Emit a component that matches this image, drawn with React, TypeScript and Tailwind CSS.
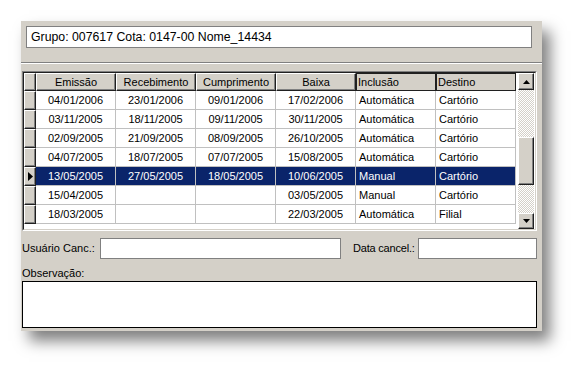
import React from "react";

type Row = { e: string; r: string; c: string; b: string; i: string; d: string; sel?: boolean };

const rows: Row[] = [
  { e: "04/01/2006", r: "23/01/2006", c: "09/01/2006", b: "17/02/2006", i: "Automática", d: "Cartório" },
  { e: "03/11/2005", r: "18/11/2005", c: "09/11/2005", b: "30/11/2005", i: "Automática", d: "Cartório" },
  { e: "02/09/2005", r: "21/09/2005", c: "08/09/2005", b: "26/10/2005", i: "Automática", d: "Cartório" },
  { e: "04/07/2005", r: "18/07/2005", c: "07/07/2005", b: "15/08/2005", i: "Automática", d: "Cartório" },
  { e: "13/05/2005", r: "27/05/2005", c: "18/05/2005", b: "10/06/2005", i: "Manual", d: "Cartório", sel: true },
  { e: "15/04/2005", r: "", c: "", b: "03/05/2005", i: "Manual", d: "Cartório" },
  { e: "18/03/2005", r: "", c: "", b: "22/03/2005", i: "Automática", d: "Filial" },
];

function HeadCell({ label, left }: { label: string; left?: boolean }) {
  if (left) {
    return (
      <div className="w-[80px] h-[18px] box-border border border-[#202020] bg-[#d4d0c8] flex items-center pl-[1px] leading-none">
        {label}
      </div>
    );
  }
  return (
    <div className="w-[80px] h-[18px] box-border border-t border-l border-t-white border-l-white border-r border-b border-r-[#202020] border-b-[#202020] shadow-[inset_-1px_-1px_0_#808080] bg-[#d4d0c8] flex items-center justify-center leading-none">
      {label}
    </div>
  );
}

function Cell({ text, left, sel }: { text: string; left?: boolean; sel?: boolean }) {
  return (
    <div
      className={`w-[80px] h-[19px] box-border border-r border-b border-[#c0c0c0] flex items-center leading-none ${
        left ? "pl-[3px]" : "justify-center"
      } ${sel ? "bg-[#0a246a] text-white" : "bg-white"}`}
    >
      {text}
    </div>
  );
}

function Indicator({ sel }: { sel?: boolean }) {
  return (
    <div className="w-[12px] h-[19px] box-border border-t border-l border-t-white border-l-white border-r border-b border-r-[#202020] border-b-[#202020] shadow-[inset_-1px_-1px_0_#808080] bg-[#d4d0c8] flex items-center pl-[3px]">
      {sel ? (
        <svg width="5" height="9" viewBox="0 0 5 9">
          <polygon points="0,0 5,4.5 0,9" fill="#000" />
        </svg>
      ) : null}
    </div>
  );
}

function ScrollBtn({ up, h }: { up?: boolean; h: string }) {
  return (
    <div
      className={`w-[16px] ${h} box-border border-t border-l border-t-white border-l-white border-r border-b border-r-[#202020] border-b-[#202020] shadow-[inset_-1px_-1px_0_#808080] bg-[#d4d0c8] flex items-center justify-center`}
    >
      <svg width="7" height="4" viewBox="0 0 7 4">
        {up ? <polygon points="3.5,0 7,4 0,4" fill="#000" /> : <polygon points="0,0 7,0 3.5,4" fill="#000" />}
      </svg>
    </div>
  );
}

function Sunken({ className }: { className: string }) {
  return <div className={`box-border border border-[#808080] bg-white ${className}`} />;
}

export default function App() {
  return (
    <div className="w-[584px] h-[373px] bg-white pt-[21px] pl-[21px] font-['Liberation_Sans',Arial,sans-serif] text-[11px] text-black">
      <div className="w-[521px] h-[310px] bg-[#d4d0c8] shadow-[8px_10px_14px_rgba(0,0,0,0.5)] flex flex-col">
        {/* top section */}
        <div className="h-[42px] border-b border-[#808080] pt-[5px] pl-[5px]">
          <div className="w-[506px] h-[22px] box-border border border-[#808080] bg-white flex items-center pl-[4px] text-[12.3px] leading-none">
            Grupo: 007617 Cota: 0147-00 Nome_14434
          </div>
        </div>
        <div className="border-t border-white" />
        {/* grid */}
        <div className="mt-[7px] ml-[1px] w-[515px] h-[160px] box-border border border-t-[#808080] border-l-[#808080] border-r-white border-b-white">
          <div className="w-full h-full box-border border border-t-[#202020] border-l-[#202020] border-r-[#d4d0c8] border-b-[#d4d0c8] bg-white flex">
            <div className="w-[492px] flex flex-col">
              <div className="flex">
                <div className="w-[12px] h-[18px] box-border border-t border-l border-t-white border-l-white border-r border-b border-r-[#202020] border-b-[#202020] shadow-[inset_-1px_-1px_0_#808080] bg-[#d4d0c8]" />
                <HeadCell label="Emissão" />
                <HeadCell label="Recebimento" />
                <HeadCell label="Cumprimento" />
                <HeadCell label="Baixa" />
                <HeadCell label="Inclusão" left />
                <HeadCell label="Destino" left />
              </div>
              {rows.map((r, idx) => (
                <div key={idx} className="flex">
                  <Indicator sel={r.sel} />
                  <Cell text={r.e} sel={r.sel} />
                  <Cell text={r.r} sel={r.sel} />
                  <Cell text={r.c} sel={r.sel} />
                  <Cell text={r.b} sel={r.sel} />
                  <Cell text={r.i} left sel={r.sel} />
                  <Cell text={r.d} left sel={r.sel} />
                </div>
              ))}
            </div>
            <div className="w-[19px] pl-[2px] flex flex-col">
              <ScrollBtn up h="h-[17px]" />
              <div className="w-[16px] flex-1 bg-[repeating-conic-gradient(#d4d0c8_0%_25%,#ffffff_0%_50%)] bg-[length:2px_2px] pt-[47px]">
                <div className="w-[16px] h-[48px] box-border border-t border-l border-t-white border-l-white border-r border-b border-r-[#202020] border-b-[#202020] shadow-[inset_-1px_-1px_0_#808080] bg-[#d4d0c8]" />
              </div>
              <ScrollBtn h="h-[16px]" />
            </div>
          </div>
        </div>
        {/* cancel row */}
        <div className="mt-[7px] ml-[1px] flex items-center h-[21px]">
          <div className="w-[78px] leading-none">Usuário Canc.:</div>
          <Sunken className="w-[241px] h-[21px]" />
          <div className="ml-[12px] w-[65px] leading-none tracking-[-0.2px]">Data cancel.:</div>
          <Sunken className="w-[119px] h-[21px]" />
        </div>
        <div className="mt-[8px] ml-[1px] h-[13px] leading-[13px]">Observação:</div>
        <div className="mt-[1px] ml-[1px] w-[515px] h-[47px] box-border border border-[#000] bg-white" />
      </div>
    </div>
  );
}
